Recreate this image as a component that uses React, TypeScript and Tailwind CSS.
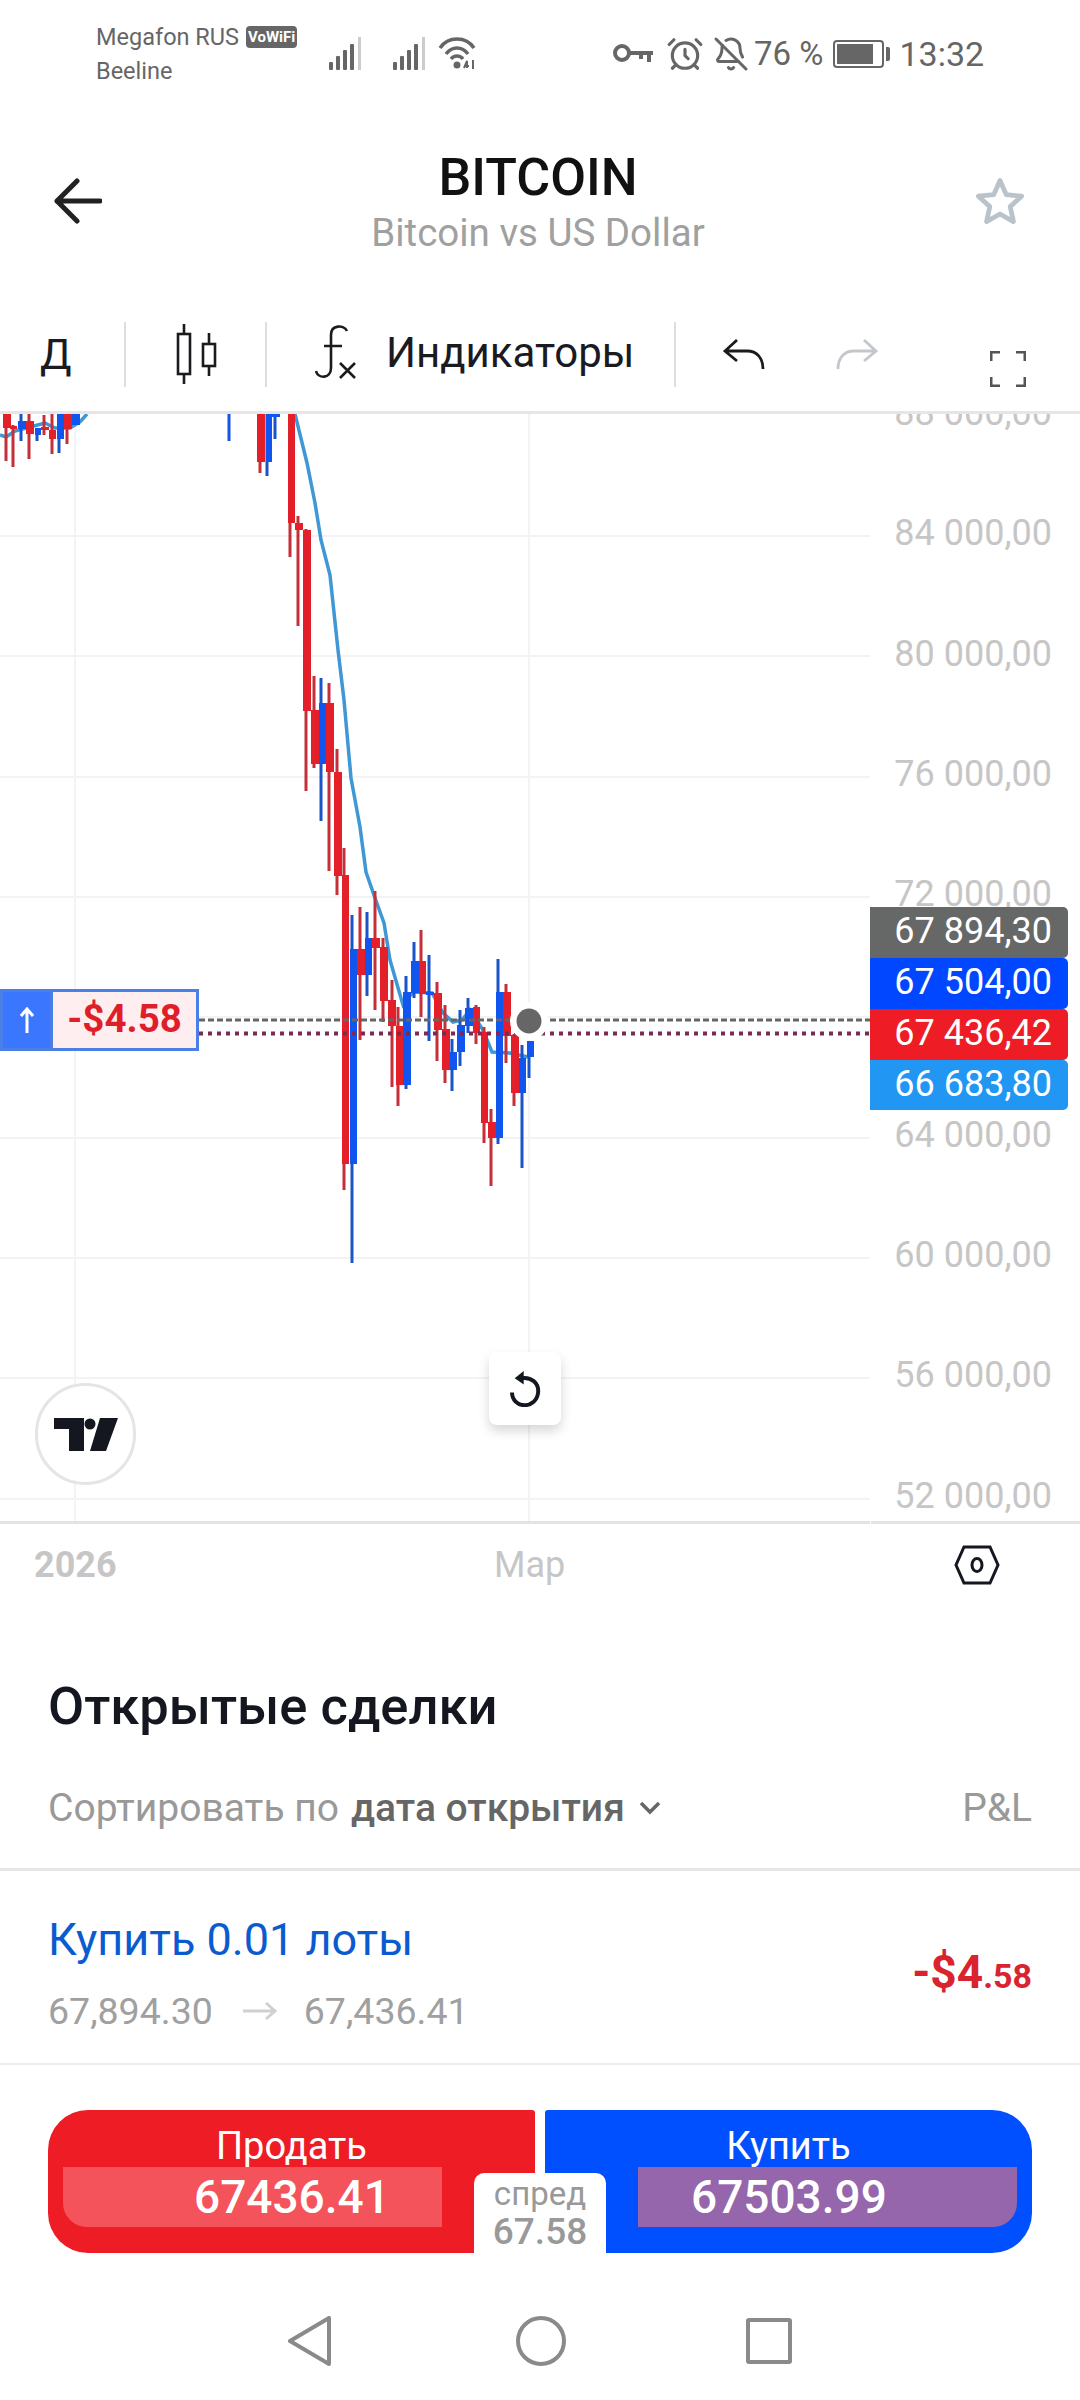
import { AlarmClock, BellOff } from 'lucide-react';

// x1, x2, bodyTop, bodyBottom, wickX, wickTop, wickBottom, colour
type Candle = [number, number, number, number, number, number, number, 'r' | 'b'];

const candles: Candle[] = [
  [3, 11, 414, 428, 6, 414, 461, 'r'],
  [10, 17, 426, 429, 13, 425, 467, 'r'],
  [18, 26, 421, 429, 21, 414, 441, 'b'],
  [26, 34, 421, 434, 29, 414, 459, 'r'],
  [35, 41, 428, 435, 37, 428, 441, 'b'],
  [41, 49, 427, 430, 44, 415, 435, 'r'],
  [49, 56, 430, 439, 52, 414, 454, 'r'],
  [57, 64, 414, 439, 59, 414, 453, 'b'],
  [64, 72, 414, 429, 67, 414, 444, 'r'],
  [72, 80, 414, 425, 75, 414, 425, 'b'],
  [228, 230, 414, 441, 229, 414, 441, 'b'],
  [257, 265, 414, 462, 260, 414, 473, 'r'],
  [266, 272, 414, 462, 267, 414, 476, 'b'],
  [272, 280, 414, 417, 275, 414, 439, 'b'],
  [288, 295, 414, 523, 290, 414, 557, 'r'],
  [295, 303, 523, 530, 298, 516, 626, 'r'],
  [303, 311, 530, 711, 306, 529, 791, 'r'],
  [311, 319, 710, 764, 314, 676, 768, 'r'],
  [319, 326, 703, 764, 321, 678, 821, 'b'],
  [326, 334, 703, 772, 329, 683, 871, 'r'],
  [334, 342, 772, 876, 337, 749, 895, 'r'],
  [342, 349, 875, 1164, 344, 848, 1190, 'r'],
  [350, 357, 949, 1164, 352, 915, 1263, 'b'],
  [357, 365, 949, 975, 360, 907, 1040, 'r'],
  [365, 372, 938, 975, 367, 912, 996, 'b'],
  [372, 380, 938, 948, 375, 891, 1010, 'r'],
  [380, 388, 947, 1001, 383, 938, 1022, 'r'],
  [388, 396, 1000, 1026, 392, 980, 1087, 'r'],
  [396, 403, 1026, 1085, 398, 1007, 1106, 'r'],
  [403, 411, 992, 1085, 406, 976, 1089, 'b'],
  [411, 419, 961, 993, 414, 942, 998, 'b'],
  [419, 426, 961, 994, 421, 930, 1017, 'r'],
  [426, 434, 992, 995, 429, 955, 1041, 'b'],
  [434, 442, 993, 1030, 437, 982, 1061, 'r'],
  [442, 450, 1029, 1070, 445, 1005, 1083, 'r'],
  [450, 457, 1052, 1070, 452, 1039, 1091, 'b'],
  [457, 465, 1025, 1052, 460, 1010, 1066, 'b'],
  [465, 473, 1008, 1026, 468, 998, 1033, 'b'],
  [473, 480, 1007, 1033, 476, 1005, 1044, 'r'],
  [481, 488, 1032, 1123, 484, 1027, 1143, 'r'],
  [488, 496, 1122, 1138, 491, 1109, 1186, 'r'],
  [496, 503, 992, 1138, 498, 959, 1144, 'b'],
  [503, 511, 992, 1036, 506, 984, 1063, 'r'],
  [511, 519, 1035, 1093, 514, 1034, 1106, 'r'],
  [519, 526, 1058, 1093, 522, 1045, 1168, 'b'],
  [527, 534, 1041, 1057, 529, 1041, 1078, 'b'],
];

const maLeft = '0,435 6,437 15,431 30,427 45,423 55,428 70,428 80,422 87,414';
const maRight =
  '295,414 307,463 315,503 321,540 330,575 338,650 344,700 351,778 360,827 366,872 375,898 384,923 390,960 403,1005 413,992 432,993 443,1013 453,1022 462,1020 470,1010 483,1030 492,1052 510,1053 528,1057';

const gridY = [536, 656, 777, 897, 1017, 1138, 1258, 1378, 1499];
// the 68 000 slot is covered by the price tags
const priceLabels = ['88 000,00', '84 000,00', '80 000,00', '76 000,00', '72 000,00', '', '64 000,00', '60 000,00', '56 000,00', '52 000,00'];

function Signal() {
  return (
    <svg width="35" height="33" viewBox="0 0 35 33">
      <rect x="0" y="25" width="4" height="8" rx="1" fill="#666" />
      <rect x="7" y="19" width="4" height="14" rx="1" fill="#666" />
      <rect x="14" y="13" width="4" height="20" rx="1" fill="#666" />
      <rect x="21" y="7" width="4" height="26" rx="1" fill="#666" />
      <rect x="29" y="0" width="3" height="33" fill="#ccc" />
    </svg>
  );
}

function Wifi() {
  return (
    <svg width="40" height="34" viewBox="0 0 40 34" fill="none" stroke="#666" strokeWidth="3.5">
      <path d="M2 12 C10 0 28 0 36 12" />
      <path d="M8 18 C14 10 24 10 30 18" />
      <path d="M13 23 C16 19 22 19 25 23" />
      <circle cx="19" cy="29" r="3.5" fill="#666" stroke="none" />
      <path d="M26 32 L29 25 V32 M26 30 H31 M35 24 V33" strokeWidth="2" />
    </svg>
  );
}

function StatusBar() {
  return (
    <div className="flex h-[104px] items-start pl-[96px] pt-[20px] text-[#666]">
      <div className="w-[233px] text-[23.5px] leading-[34px]">
        <div className="flex items-center gap-[7px]">
          <span>Megafon RUS</span>
          <span className="rounded-[4px] bg-[#666] px-[2px] text-[15px] font-bold leading-[22px] text-white">VoWiFi</span>
        </div>
        <div>Beeline</div>
      </div>
      <div className="mt-[16px] flex items-end">
        <Signal />
        <div className="ml-[29px]"><Signal /></div>
        <div className="ml-[10px]"><Wifi /></div>
      </div>
      <div className="ml-[135px] mt-[15px] flex items-center">
        <svg width="41" height="24" viewBox="0 0 41 24" fill="none" stroke="#666" strokeWidth="4">
          <circle cx="9" cy="11" r="7" />
          <path d="M16 11 H40 M36 11 V20 M28 11 V17" />
        </svg>
        <AlarmClock className="ml-[12px]" size={38} strokeWidth={2} color="#666" />
        <BellOff className="ml-[9px]" size={36} strokeWidth={2} color="#666" />
        <span className="ml-[5px] text-[33px] leading-[36px]">76 %</span>
        <div className="ml-[10px] flex items-center">
          <div className="h-[28px] w-[51px] rounded-[4px] border-2 border-[#666] p-[2px]">
            <div className="h-full w-[36px] bg-[#666]" />
          </div>
          <div className="ml-[2px] h-[14px] w-[4px] rounded-r-[2px] bg-[#666]" />
        </div>
        <span className="ml-[9px] text-[34px] leading-[36px]">13:32</span>
      </div>
    </div>
  );
}

function Header() {
  return (
    <div className="flex h-[186px] items-start px-[54px] pt-[46px]">
      <svg className="mt-[28px]" width="48" height="46" viewBox="0 0 48 46" fill="none" stroke="#222" strokeWidth="5" strokeLinecap="round" strokeLinejoin="round">
        <path d="M23 3 L3 23 L23 43 M3 23 H46" />
      </svg>
      <div className="flex-1 text-center">
        <div className="text-[52px] font-medium leading-[56px] text-[#111]">BITCOIN</div>
        <div className="mt-[5px] text-[38.5px] leading-[44px] text-[#a0a0a0]">Bitcoin vs US Dollar</div>
      </div>
      <svg className="mt-[26px]" width="52" height="50" viewBox="0 0 24 23" fill="none" stroke="#b9c3c9" strokeWidth="2.2" strokeLinejoin="round">
        <path d="M12 2 L14.9 8.6 L22 9.3 L16.7 14.1 L18.2 21 L12 17.5 L5.8 21 L7.3 14.1 L2 9.3 L9.1 8.6 Z" />
      </svg>
    </div>
  );
}

function Toolbar() {
  return (
    <div className="flex h-[124px] items-start border-b-[3px] border-[#e6e6e6] pt-[32px] text-[#1b1b1f]">
      <span className="ml-[40px] w-[84px] text-[42px] leading-[66px]">Д</span>
      <div className="h-[65px] w-[2px] bg-[#dedede]" />
      <svg className="ml-[49px] mt-[2px]" width="44" height="60" viewBox="0 0 44 60" fill="none" stroke="#1b1b1f" strokeWidth="2.6">
        <path d="M9 0 V10 M9 50 V60 M34 9 V20 M34 42 V52" />
        <rect x="3" y="10" width="12" height="40" />
        <rect x="28" y="20" width="12" height="22" />
      </svg>
      <div className="ml-[46px] h-[65px] w-[2px] bg-[#dedede]" />
      <svg className="ml-[48px] mt-[3px]" width="42" height="54" viewBox="0 0 42 54" fill="none" stroke="#1b1b1f" strokeWidth="2.6">
        <path d="M32 6 C29 0 16 -1 16 10 V43 C16 54 3 54 1 46 M9 21 H27" />
        <path d="M25 38 L40 53 M40 38 L25 53" />
      </svg>
      <span className="ml-[29px] w-[244px] text-[42px] leading-[62px]">Индикаторы</span>
      <div className="ml-[44px] h-[65px] w-[2px] bg-[#dedede]" />
      <svg className="ml-[47px] mt-[16px]" width="42" height="32" viewBox="0 0 42 32" fill="none" stroke="#1b1b1f" strokeWidth="2.8">
        <path d="M14 2 L2 13 L14 23 M2 13 H24 C34 13 40 20 40 31" />
      </svg>
      <svg className="ml-[71px] mt-[16px]" width="42" height="32" viewBox="0 0 42 32" fill="none" stroke="#c3c7cb" strokeWidth="2.8">
        <path d="M28 2 L40 13 L28 23 M40 13 H18 C8 13 2 20 2 31" />
      </svg>
      <svg className="ml-[112px] mt-[29px]" width="36" height="36" viewBox="0 0 36 36" fill="none" stroke="#555" strokeWidth="3">
        <path d="M1 10 V1 H10 M26 1 H35 V10 M1 26 V35 H10 M26 35 H35 V26" />
      </svg>
    </div>
  );
}

function ChartCanvas() {
  return (
    <svg className="absolute inset-0" width="870" height="1107" viewBox="0 414 870 1107">
      {gridY.map((y) => (
        <line key={y} x1="0" x2="870" y1={y} y2={y} stroke="#f3f3f5" strokeWidth="2" />
      ))}
      <line x1="75" x2="75" y1="414" y2="1521" stroke="#f3f3f5" strokeWidth="2" />
      <line x1="529" x2="529" y1="414" y2="1521" stroke="#f3f3f5" strokeWidth="2" />
      <polyline points={maLeft} fill="none" stroke="#3f97d6" strokeWidth="3.5" />
      <polyline points={maRight} fill="none" stroke="#3f97d6" strokeWidth="3.5" />
      {candles.map(([x1, x2, top, bottom, wx, wt, wb, c], i) => (
        <g key={i}>
          <rect x={wx - 1.5} y={wt} width="3" height={wb - wt} fill={c === 'r' ? '#c4303a' : '#1a55c8'} />
          <rect x={x1} y={top} width={x2 - x1} height={bottom - top} fill={c === 'r' ? '#e3202a' : '#0f55ee'} />
        </g>
      ))}
      <line x1="199" x2="870" y1="1020" y2="1020" stroke="#666" strokeWidth="3" strokeDasharray="6 3" />
      <line x1="199" x2="870" y1="1033.5" y2="1033.5" stroke="#7a2a55" strokeWidth="4" strokeDasharray="4 5" />
      <circle cx="529" cy="1021" r="19" fill="#fff" />
      <circle cx="529" cy="1021" r="12.5" fill="#666" />
    </svg>
  );
}

function Chart() {
  return (
    <div className="relative flex h-[1110px] overflow-hidden">
      <div className="relative h-full w-[870px] border-b-[3px] border-[#e3e3e3]">
        <ChartCanvas />
        <div className="absolute left-0 top-[575px] flex h-[62px] w-[199px] border-[3px] border-[#4a7fe8] bg-[#ffeeef]">
          <div className="flex w-[50px] items-center justify-center border-r-[3px] border-[#4a7fe8] bg-[#3b76ff]">
            <svg width="14" height="26" viewBox="0 0 14 26" fill="none" stroke="#fff" strokeWidth="3">
              <path d="M7 26 V2 M1 9 L7 2 L13 9" />
            </svg>
          </div>
          <span className="flex-1 text-center text-[38.5px] font-bold leading-[54px] text-[#e01e2a]">-$4.58</span>
        </div>
        <div className="absolute left-[489px] top-[938px] flex h-[73px] w-[72px] items-center justify-center rounded-[8px] bg-white shadow-[0_6px_12px_rgba(0,0,0,0.16)]">
          <svg width="31" height="36" viewBox="0 0 34 40" fill="none" stroke="#14171f" strokeWidth="4.4">
            <path d="M12 8 C24 6 32 14 31 24 C30 33 23 38 16 38 C8 38 2 32 2 24" />
            <path d="M15 0 L15 15 L5 8 Z" fill="#14171f" stroke="none" />
          </svg>
        </div>
        <div className="absolute left-[35px] top-[969px] flex h-[102px] w-[101px] items-center justify-center rounded-full border-[3px] border-[#e5e5e5] bg-white">
          <svg width="64" height="33" viewBox="0 0 64 33" fill="#14171f">
            <path d="M0 0 H30 V33 H15 V11 H0 Z" />
            <circle cx="36" cy="6" r="5.5" />
            <path d="M46 0 H64 L52 33 H36 Z" />
          </svg>
        </div>
      </div>
      <div className="ml-px flex-1 border-b-[3px] border-[#e3e3e3]">
        <div className="-mt-[61px] flex flex-col pr-[28px] text-right text-[36px] text-[#c6c6c6]">
          {priceLabels.map((label, i) => (
            <span key={i} className="h-[120.3px] leading-[120.3px]">{label}</span>
          ))}
        </div>
      </div>
      <div className="absolute left-[870px] top-[493px] flex w-[198px] flex-col text-right text-[36px] text-white">
        <span className="h-[51px] rounded-r-[5px] bg-[#666767] pr-[16px] leading-[48px]">67 894,30</span>
        <span className="h-[51px] rounded-r-[5px] bg-[#0047ff] pr-[16px] leading-[48px]">67 504,00</span>
        <span className="h-[51px] rounded-r-[5px] bg-[#ee1c25] pr-[16px] leading-[48px]">67 436,42</span>
        <span className="h-[50px] rounded-r-[5px] bg-[#2196f3] pr-[16px] leading-[48px]">66 683,80</span>
      </div>
    </div>
  );
}

function TimeAxis() {
  return (
    <div className="flex h-[76px] items-center pl-[34px] pt-[6px] text-[36px] text-[#c6c6c6]">
      <span className="w-[81px] text-center font-bold">2026</span>
      <span className="ml-[379px] w-[69px] text-center">Мар</span>
      <svg className="ml-[391px]" width="46" height="40" viewBox="0 0 46 40" fill="none" stroke="#14171f" strokeWidth="3">
        <path d="M10 2 H36 L44 20 L36 38 H10 L2 20 Z" />
        <ellipse cx="23" cy="20" rx="5" ry="6.5" />
      </svg>
    </div>
  );
}

function Trades() {
  return (
    <div>
      <div className="px-[48px] pt-[78px] text-[52.5px] font-medium leading-[56px] text-[#14171f]">Открытые сделки</div>
      <div className="flex h-[137px] items-center border-b-[3px] border-[#e6e6e6] pl-[48px] pr-[48px] pt-[14px] text-[39px]">
        <span className="text-[#999]">Сортировать по</span>
        <span className="ml-[12px] font-medium text-[#666]">дата открытия</span>
        <svg className="ml-[14px]" width="22" height="14" viewBox="0 0 22 14" fill="none" stroke="#666" strokeWidth="3.5">
          <path d="M2 2 L11 11 L20 2" />
        </svg>
        <span className="ml-auto text-[#999]">P&amp;L</span>
      </div>
      <div className="flex h-[194px] items-start justify-between border-b-[2px] border-[#ececec] px-[48px]">
        <div className="pt-[44px]">
          <div className="text-[45px] leading-[50px] text-[#0a5bd0]">Купить 0.01 лоты</div>
          <div className="mt-[25px] flex items-center text-[37.5px] leading-[42px] text-[#a0a0a0]">
            <span>67,894.30</span>
            <svg className="ml-[30px] mr-[27px]" width="34" height="20" viewBox="0 0 34 20" fill="none" stroke="#d0d0d0" strokeWidth="3">
              <path d="M0 10 H32 M23 2 L32 10 L23 18" />
            </svg>
            <span>67,436.41</span>
          </div>
        </div>
        <div className="mt-[74px] font-bold leading-[54px] text-[#d9232e]">
          <span className="text-[46px]">-$4</span>
          <span className="text-[34px]">.58</span>
        </div>
      </div>
    </div>
  );
}

function TradeButtons() {
  return (
    <div className="relative mx-[48px] mt-[45px] flex h-[143px] gap-[10px] text-white">
      <div className="flex-1 rounded-l-[40px] rounded-r-[3px] bg-[#ee1c25] px-[15px]">
        <div className="h-[57px] pt-[14px] text-center text-[38px] leading-[44px]">Продать</div>
        <div className="h-[60px] w-[379px] rounded-bl-[24px] bg-[#f4535c] pl-[131px] text-[46px] font-medium leading-[60px]">67436.41</div>
      </div>
      <div className="flex-1 rounded-r-[40px] rounded-l-[3px] bg-[#0050ff] px-[15px]">
        <div className="h-[57px] pt-[14px] text-center text-[38px] leading-[44px]">Купить</div>
        <div className="ml-[78px] h-[60px] w-[379px] rounded-br-[24px] bg-[#9566ac] pl-[53px] text-[46px] font-medium leading-[60px]">67503.99</div>
      </div>
      <div className="absolute bottom-0 left-[426px] flex h-[80px] w-[132px] flex-col items-center rounded-t-[10px] bg-white pt-[2px] text-[#999]">
        <span className="text-[33px] leading-[38px]">спред</span>
        <span className="text-[37px] font-medium leading-[38px]">67.58</span>
      </div>
    </div>
  );
}

function NavBar() {
  return (
    <div className="mt-[63px] flex items-center pl-[288px]">
      <svg width="44" height="50" viewBox="0 0 44 50" fill="none" stroke="#8a8a8a" strokeWidth="4" strokeLinejoin="round">
        <path d="M41 2 V48 L2 25 Z" />
      </svg>
      <svg className="ml-[184px]" width="50" height="50" viewBox="0 0 50 50" fill="none" stroke="#8a8a8a" strokeWidth="4">
        <circle cx="25" cy="25" r="23" />
      </svg>
      <div className="ml-[180px] h-[46px] w-[46px] rounded-[3px] border-4 border-[#8a8a8a]" />
    </div>
  );
}

export default function App() {
  return (
    <div className="h-[2400px] w-[1080px] overflow-hidden bg-white font-[Roboto,sans-serif]">
      <StatusBar />
      <Header />
      <Toolbar />
      <Chart />
      <TimeAxis />
      <Trades />
      <TradeButtons />
      <NavBar />
    </div>
  );
}
